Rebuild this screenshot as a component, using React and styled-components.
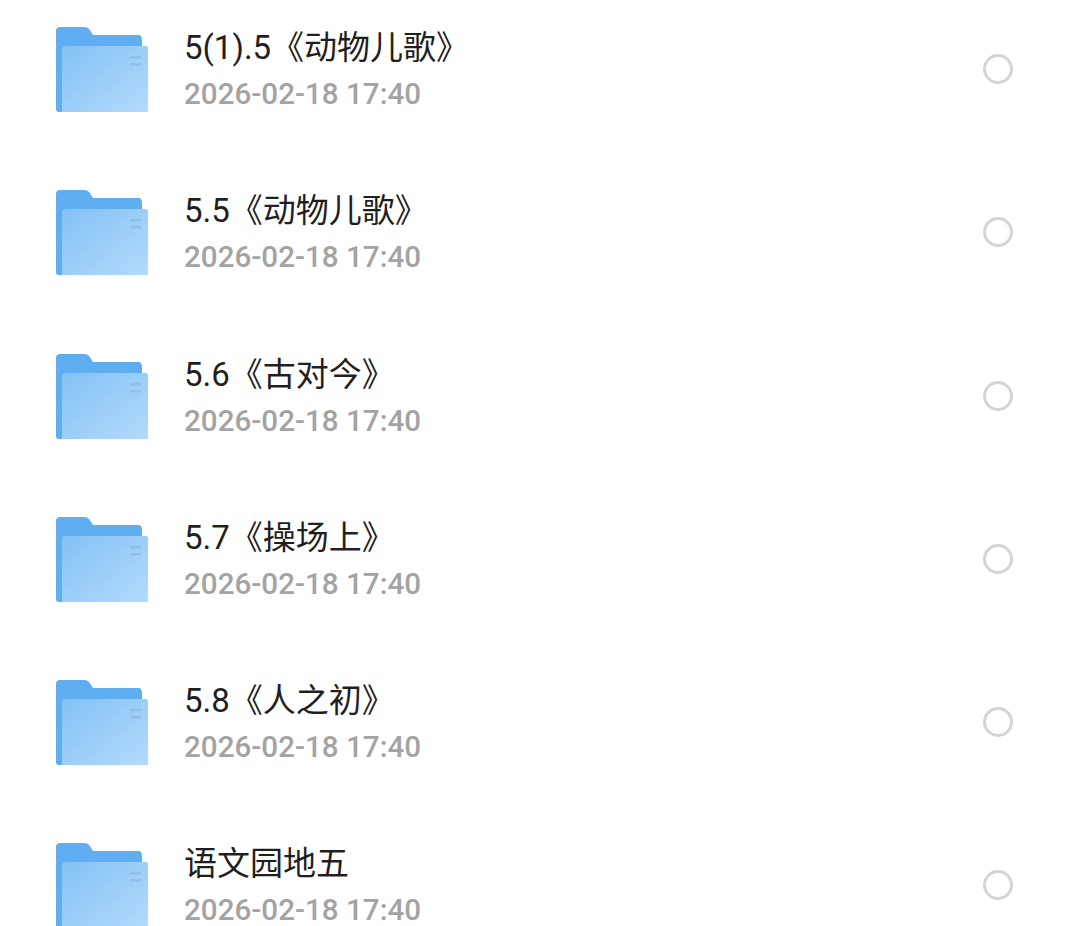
import React from 'react';
import styled, { createGlobalStyle } from 'styled-components';

const GlobalStyle = createGlobalStyle`
    html, body {
        margin: 0;
        background: #fff;
        overflow: hidden;
    }
`

const List = styled.div`
    height: 926px;
    overflow: hidden;
    font-family: Roboto, "Noto Sans CJK SC", sans-serif;
`

const Row = styled.div`
    display: flex;
    align-items: flex-start;
    height: 163.25px;
    padding: 27px 67px 0 56px;
    box-sizing: border-box;
`

const Info = styled.div`
    flex: 1;
    margin-left: 36px;
    margin-top: -2px;
`

const Name = styled.div`
    color: #1f1f1f;
    font-size: 33px;
    line-height: 46px;
    white-space: nowrap;
`

const Time = styled.div`
    color: #a3a3a3;
    font-size: 29.6px;
    font-weight: 500;
    line-height: 40px;
    margin-top: 3px;
    white-space: nowrap;
`

const Radio = styled.div`
    width: 30px;
    height: 30px;
    margin-top: 27px;
    border: 3px solid #d4d4d4;
    border-radius: 50%;
    box-sizing: border-box;
`

const FolderIcon = ({ id }) => (
    <svg width="92" height="86" viewBox="0 0 92 86" style={{ flexShrink: 0 }}>
        <defs>
            <linearGradient id={`front${id}`} x1="0" y1="0" x2="1" y2="1">
                <stop offset="0" stopColor="#84c1f5" />
                <stop offset="1" stopColor="#b3dafb" />
            </linearGradient>
        </defs>
        <path
            d="M4 0H28C31 0 33 1.500 34.500 4L37 8H82C85 8 86 10 86 13V85H3C1 85 0 84 0 82V4C0 1.500 1.500 0 4 0Z"
            fill="#5eaef1"
        />
        <path d="M9 19H90C91 19 92 20 92 21V85H6V22C6 20 7 19 9 19Z" fill={`url(#front${id})`} />
        <rect x="74" y="29" width="11" height="2.500" fill="#8dbfe9" />
        <rect x="74" y="36" width="11" height="2.500" fill="#8dbfe9" />
    </svg>
)

const items = [
    '5(1).5《动物儿歌》',
    '5.5《动物儿歌》',
    '5.6《古对今》',
    '5.7《操场上》',
    '5.8《人之初》',
    '语文园地五',
];

const App = () => (
    <List>
        <GlobalStyle />
        {
            items.map((item, index) => {
                return (
                    <Row key={item}>
                        <FolderIcon id={index} />
                        <Info>
                            <Name>{item}</Name>
                            <Time>2026-02-18 17:40</Time>
                        </Info>
                        <Radio />
                    </Row>
                )
            })
        }
    </List>
);

export default App;
